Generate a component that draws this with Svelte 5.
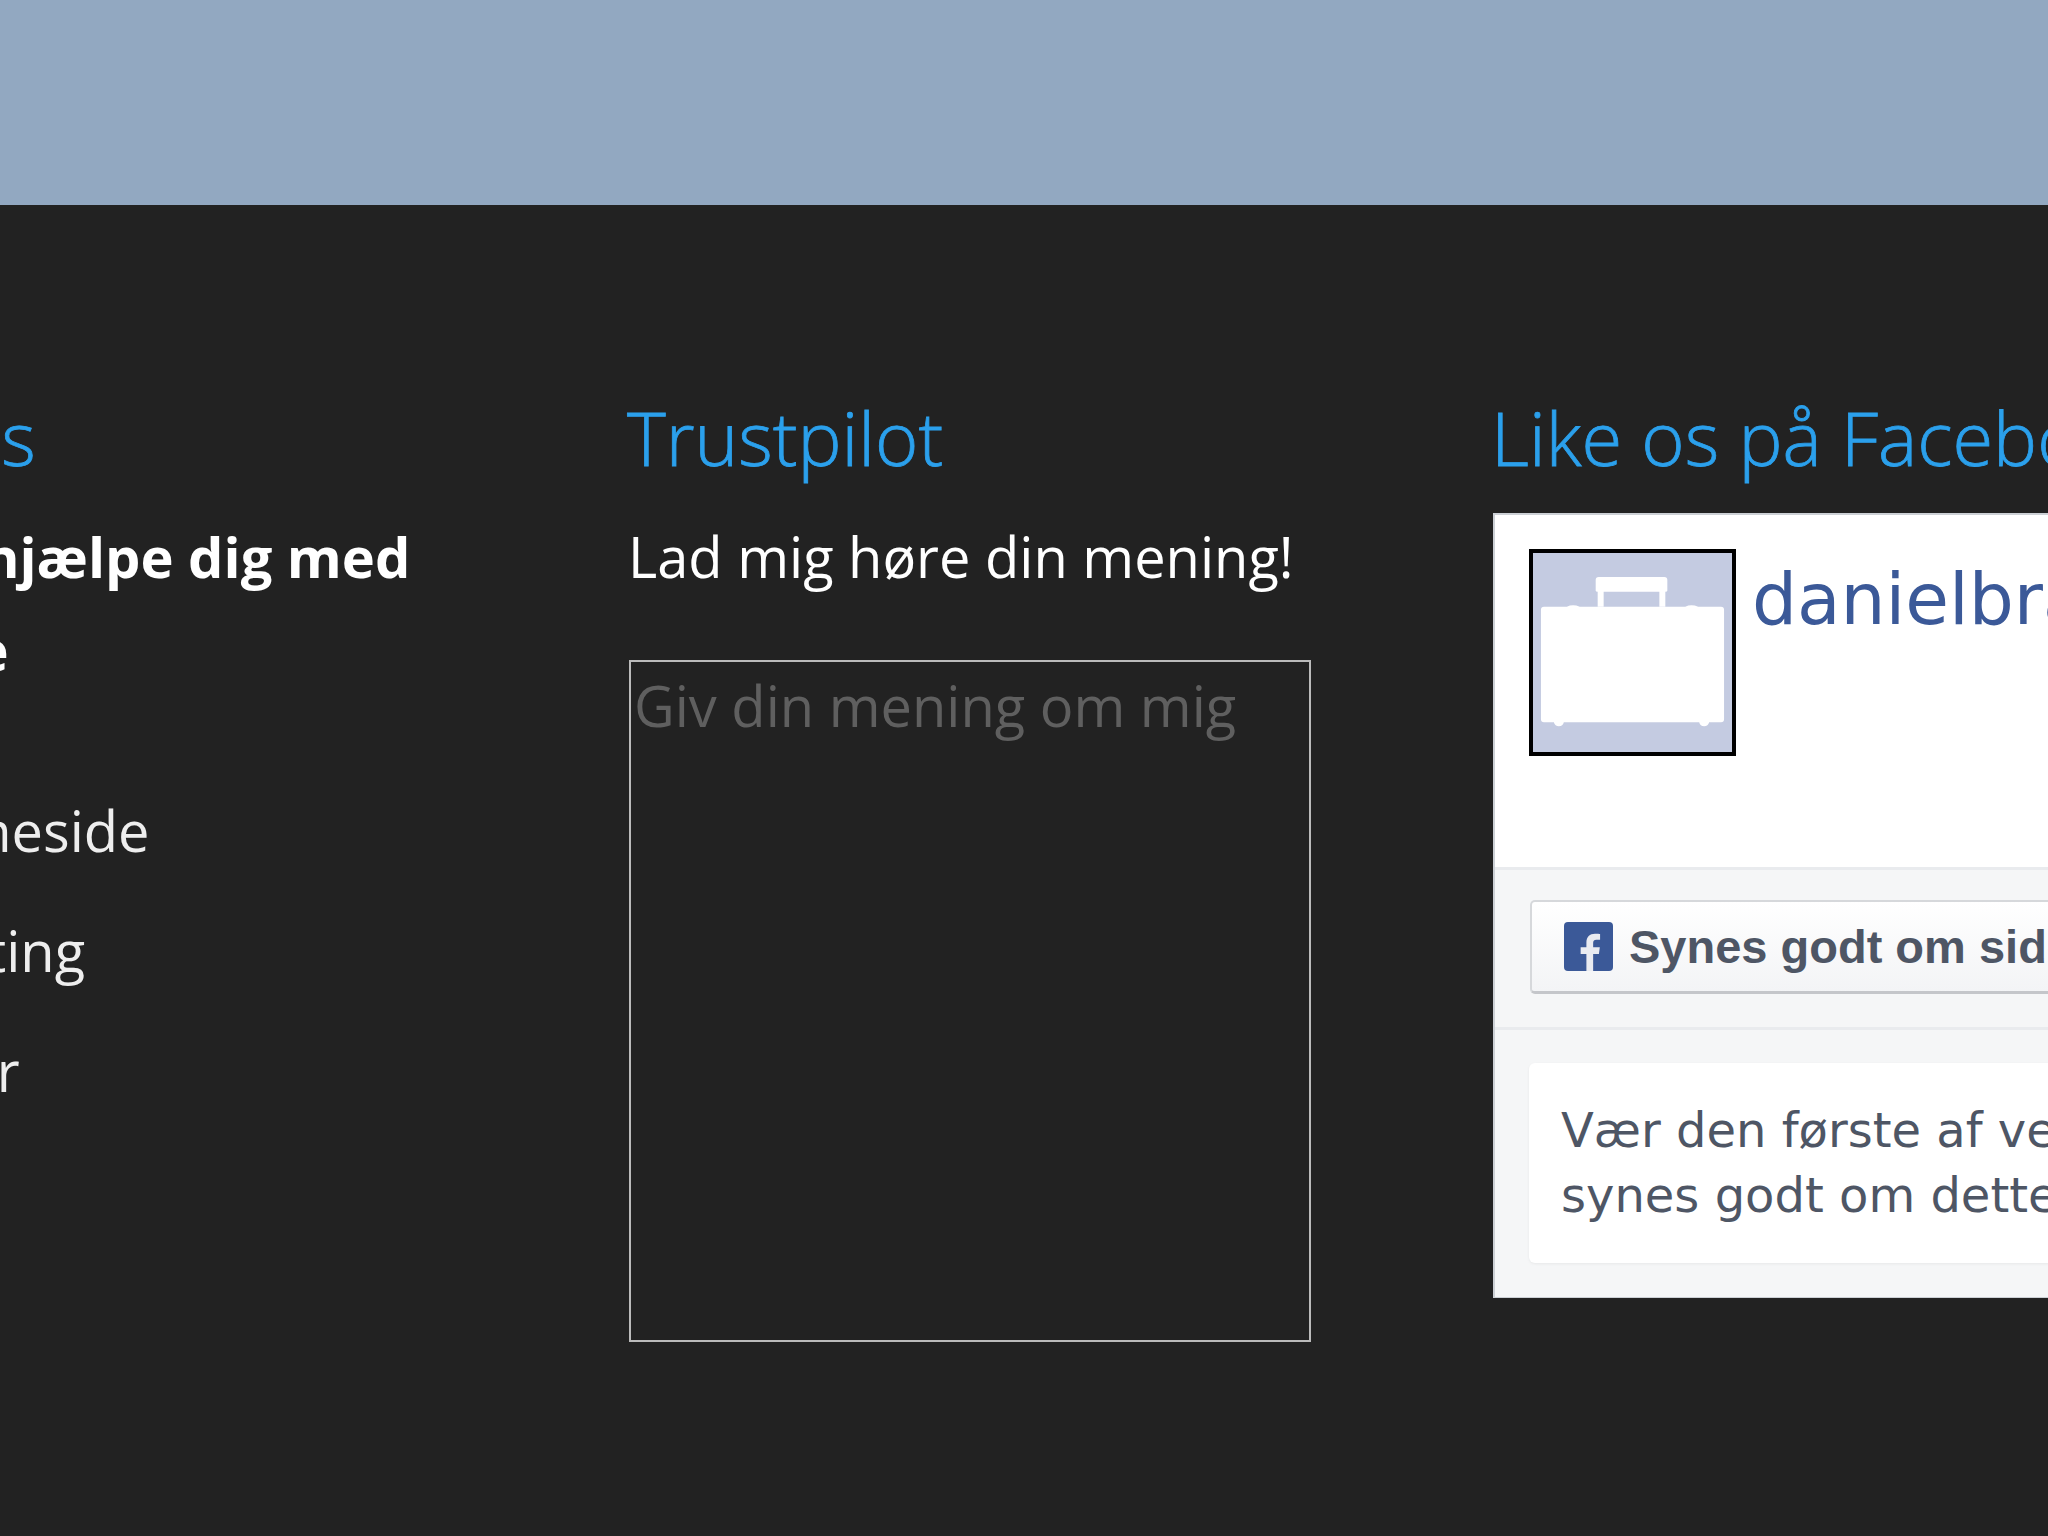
<script lang="ts">
	const services = ['Hjemmeside', 'Marketing', 'Billeder'];
</script>

<div class="page">
	<div class="hero"></div>
	<footer class="footer">
		<div class="columns">
			<section class="col">
				<h2>Services</h2>
				<p class="lead">Jeg kan hjælpe dig med<br />følgende</p>
				<ul>
					{#each services as item}
						<li>{item}</li>
					{/each}
				</ul>
			</section>

			<section class="col">
				<h2>Trustpilot</h2>
				<p class="intro">Lad mig høre din mening!</p>
				<textarea placeholder="Giv din mening om mig"></textarea>
			</section>

			<section class="col">
				<h2>Like os på Facebook</h2>
				<div class="fb">
					<div class="fb-head">
						<div class="avatar">
							<svg viewBox="0 0 200 200" width="199" height="199">
								<rect width="200" height="200" fill="#c4cbe1" />
								<path fill="#fff" d="M63 27q0-3 3-3h66q3 0 3 3v11q0 1-2 1v15h-6V39H71v15h-6V39q-2 0-2-1z" />
								<path fill="#fff" d="M8 57q0-3 3-3h23q6-3 13 0h106q6-3 13 0h23q3 0 3 3v110q0 3-3 3h-12q-1 4-5 4t-5-4H31q-1 4-5 4t-5-4H11q-3 0-3-3z" />
							</svg>
						</div>
						<a class="fb-name" href="#top">danielbrandt</a>
					</div>
					<div class="fb-action">
						<div class="fb-button">
							<svg class="f-icon" viewBox="0 0 49 49" width="49" height="49">
								<rect width="49" height="49" rx="4" fill="#3b5998" />
								<path fill="#e9ebf1" transform="translate(3.5 5) scale(.9)" d="M28.500 49V30h6.400l1-7.400h-7.400v-4.700c0-2.100.6-3.600 3.700-3.600h4V7.700c-.7-.1-3-.3-5.700-.3-5.700 0-9.500 3.400-9.500 9.800v5.400h-6.400V30h6.400v19z" />
							</svg>
							<span>Synes godt om siden</span>
						</div>
					</div>
					<div class="fb-social">
						<div class="fb-card">
							Vær den første af venner, der<br />synes godt om dette.
						</div>
					</div>
				</div>
			</section>
		</div>
	</footer>
</div>

<style>
	:global(body) {
		margin: 0;
		overflow: hidden;
		background: #222;
	}

	.page {
		width: 2048px;
		height: 1536px;
		overflow: hidden;
		font-family: 'Open Sans', sans-serif;
	}

	.hero {
		height: 205px;
		background: #92a8c1;
	}

	.footer {
		height: 1331px;
		background: #222;
		padding-top: 183px;
		box-sizing: border-box;
	}

	.columns {
		display: grid;
		grid-template-columns: 862px 864px 866px;
		margin-left: -235px;
	}

	h2 {
		margin: 0;
		font-weight: 300;
		font-size: 74px;
		line-height: 100px;
		color: #2ba0ec;
		white-space: nowrap;
		-webkit-text-stroke: 0.8px #2ba0ec;
	}

	.lead {
		margin: 22px 0 0;
		font-weight: 700;
		font-size: 56px;
		line-height: 93px;
		color: #fff;
		white-space: nowrap;
	}

	ul {
		list-style: none;
		margin: 74px 0 0;
		padding: 0 0 0 56px;
	}

	li {
		font-size: 56px;
		line-height: 120px;
		color: #eee;
	}

	.intro {
		margin: 22px 0 0 1px;
		font-size: 56px;
		line-height: 93px;
		color: #fff;
		white-space: nowrap;
	}

	textarea {
		display: block;
		box-sizing: border-box;
		width: 682px;
		height: 682px;
		margin: 57px 0 0 2px;
		padding: 5px 3px;
		background: transparent;
		border: 2px solid #bbb;
		border-radius: 0;
		outline: none;
		resize: none;
		font-family: inherit;
		font-size: 56px;
		line-height: 76px;
		color: #fff;
	}

	textarea::placeholder {
		color: #5f5f5f;
		opacity: 1;
	}

	.fb {
		box-sizing: border-box;
		width: 900px;
		height: 785px;
		margin: 25px 0 0 2px;
		background: #f5f6f7;
		border-left: 2px solid #ccd0d5;
		border-top: 2px solid #ccd0d5;
		border-bottom: 1px solid #ccd0d5;
		font-family: 'DejaVu Sans', sans-serif;
	}

	.fb-head {
		display: flex;
		gap: 16px;
		height: 355px;
		padding: 34px 0 0 34px;
		box-sizing: border-box;
		background: #fff;
		border-bottom: 3px solid #e9ebee;
	}

	.avatar {
		width: 207px;
		height: 207px;
		box-sizing: border-box;
		border: 4px solid #000;
		flex: none;
	}

	.avatar svg {
		display: block;
	}

	.fb-name {
		font-size: 71px;
		line-height: 102px;
		color: #3b5998;
		text-decoration: none;
		white-space: nowrap;
	}

	.fb-action {
		height: 160px;
		padding: 30px 0 0 35px;
		box-sizing: border-box;
		border-bottom: 3px solid #e9ebee;
	}

	.fb-button {
		display: flex;
		align-items: center;
		gap: 16px;
		box-sizing: border-box;
		width: 900px;
		height: 94px;
		padding-left: 32px;
		background: linear-gradient(#fff, #f3f4f6);
		border: 2px solid #d6d8db;
		border-bottom: 3px solid #c4c6ca;
		border-radius: 5px;
		font-family: 'Liberation Sans', sans-serif;
		font-weight: 700;
		font-size: 47px;
		color: #4e5665;
		white-space: nowrap;
	}

	.f-icon {
		flex: none;
	}

	.fb-social {
		padding: 33px 0 0 34px;
	}

	.fb-card {
		box-sizing: border-box;
		width: 900px;
		height: 200px;
		padding: 35px 0 0 32px;
		background: #fff;
		border-radius: 6px;
		box-shadow: 0 1px 3px rgba(0, 0, 0, 0.06);
		font-size: 48px;
		line-height: 65px;
		color: #4e5665;
		white-space: nowrap;
	}
</style>
